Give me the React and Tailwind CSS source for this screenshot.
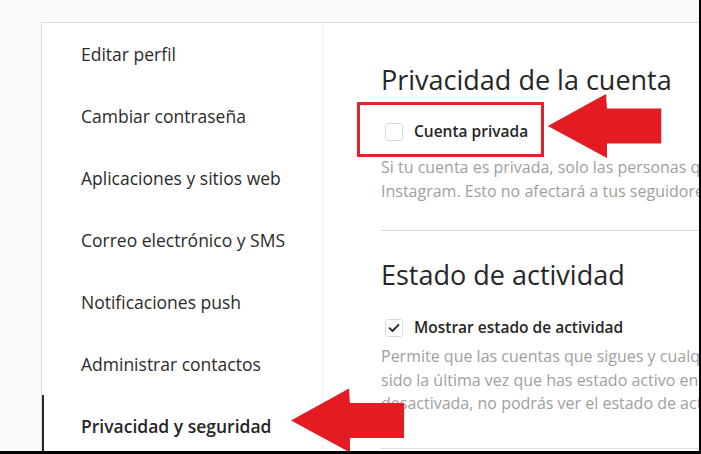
import React from 'react';

const menu = [
  'Editar perfil',
  'Cambiar contraseña',
  'Aplicaciones y sitios web',
  'Correo electrónico y SMS',
  'Notificaciones push',
  'Administrar contactos',
  'Privacidad y seguridad',
];

function Checkbox({ checked }) {
  return (
    <span className="flex h-[18px] w-[18px] shrink-0 items-center justify-center rounded-[3px] border border-[#dbdbdb] bg-white">
      {checked && (
        <svg width="12" height="10" viewBox="0 0 12 10" fill="none">
          <path d="M1.5 5.2 4.5 8 10.5 1.8" stroke="#262626" strokeWidth="1.8" strokeLinecap="round" strokeLinejoin="round" />
        </svg>
      )}
    </span>
  );
}

function Arrow({ className }) {
  return (
    <svg className={className} viewBox="0 0 120 66" fill="#e31b23">
      <polygon points="0,33 60,0 61,15 117,15 117,51 61,51 61,66" />
    </svg>
  );
}

export default function App() {
  return (
    <div
      className="relative h-[454px] w-[701px] overflow-hidden border-b-[3px] border-r-2 border-black bg-[#fafafa] pl-[41px] pt-[22px]"
      style={{ fontFamily: '"Open Sans", "Noto Sans", sans-serif' }}
    >
      <div className="flex h-[460px] w-[700px] border border-[#dbdbdb] bg-white">
        <div className="w-[281px] shrink-0 border-r border-[#efefef]">
          {menu.map((item, i) => (
            <div
              key={item}
              className={
                i === 6
                  ? 'flex h-[62px] items-center whitespace-nowrap border-l-2 border-[#262626] pl-[37px] text-[17.5px] font-semibold text-[#262626]'
                  : 'flex h-[62px] items-center whitespace-nowrap border-l-2 border-transparent pl-[37px] text-[17.5px] text-[#2b2b2b]'
              }
            >
              {item}
            </div>
          ))}
        </div>

        <div className="min-w-0 flex-1 overflow-hidden pl-[58px] pt-[40px]">
          <h2 className="whitespace-nowrap text-[27px] leading-[34px] font-normal text-[#262626]">
            Privacidad de la cuenta
          </h2>
          <label className="mt-[25px] flex h-[20px] items-center gap-[11px] pl-[4px]">
            <Checkbox checked={false} />
            <span className="whitespace-nowrap text-[15.5px] font-semibold text-[#262626]">Cuenta privada</span>
          </label>
          <p className="mt-[13px] whitespace-nowrap text-[16px] leading-[24px] text-[#a0a0a0]">
            Si tu cuenta es privada, solo las personas que apruebes
            <br />
            Instagram. Esto no afectará a tus seguidores actuales.
          </p>
          <div className="mt-[27px] h-px bg-[#dbdbdb]" />

          <h2 className="mt-[27px] whitespace-nowrap text-[27px] leading-[34px] font-normal text-[#262626]">
            Estado de actividad
          </h2>
          <label className="mt-[26px] flex h-[20px] items-center gap-[11px] pl-[4px]">
            <Checkbox checked />
            <span className="whitespace-nowrap text-[15.5px] font-semibold text-[#262626]">
              Mostrar estado de actividad
            </span>
          </label>
          <p className="mt-[7px] whitespace-nowrap text-[16px] leading-[23.5px] text-[#a0a0a0]">
            Permite que las cuentas que sigues y cualquier
            <br />
            sido la última vez que has estado activo en las
            <br />
            desactivada, no podrás ver el estado de actividad
          </p>
          <div className="mt-[32px] h-px bg-[#dbdbdb]" />
        </div>
      </div>

      <div className="pointer-events-none absolute left-[357px] top-[102px] h-[55px] w-[187px] border-[3px] border-[#e0222c]" />
      <Arrow className="pointer-events-none absolute left-[547px] top-[94px] h-[64px] w-[118px]" />
      <Arrow className="pointer-events-none absolute left-[291px] top-[383px] h-[75px] w-[116px]" />
    </div>
  );
}
